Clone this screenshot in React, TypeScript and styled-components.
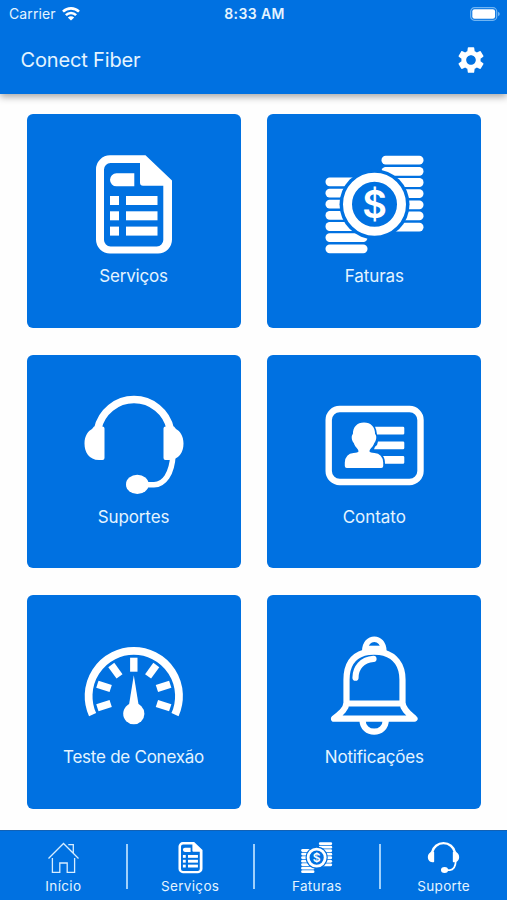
import React from "react";
import styled, { createGlobalStyle } from "styled-components";
import { MdSettings } from "react-icons/md";

const BLUE = "#0071e1";

const GlobalStyle = createGlobalStyle`
  * { box-sizing: border-box; }
  body { margin: 0; background: #fefefe; }
`;

const Screen = styled.div`
  width: 507px;
  height: 900px;
  display: flex;
  flex-direction: column;
  overflow: hidden;
  background: #fefefe;
  color: #e4f4ff;
  font-family: Inter, "Liberation Sans", sans-serif;
`;

const Header = styled.header`
  height: 93.5px;
  flex: none;
  background: ${BLUE};
  box-shadow: 0 3px 7px rgba(0, 0, 0, 0.34);
`;

const StatusBar = styled.div`
  height: 27px;
  display: grid;
  grid-template-columns: 1fr auto 1fr;
  align-items: center;
  padding: 0 7px 0 9px;
`;

const Carrier = styled.div`
  display: flex;
  align-items: center;
  gap: 6px;
  font-size: 14px;
  letter-spacing: 0.1px;
`;

const Clock = styled.div`
  font-size: 14px;
  font-weight: 600;
  letter-spacing: 0.4px;
`;

const BatterySlot = styled.div`
  display: flex;
  justify-content: flex-end;
`;

const TitleBar = styled.div`
  height: 66px;
  display: flex;
  align-items: center;
  justify-content: space-between;
  padding: 0 20px 0 20.5px;
`;

const Title = styled.h1`
  margin: 0;
  font-size: 20px;
  font-weight: 400;
  letter-spacing: -0.15px;
`;

const SettingsButton = styled.button`
  display: flex;
  padding: 0;
  border: 0;
  background: none;
  color: #fff;
`;

const Tiles = styled.main`
  flex: 1;
  display: grid;
  grid-template-columns: 214px 214px;
  grid-auto-rows: 213.5px;
  gap: 27.2px 26.8px;
  padding: 20.5px 26.5px 0;
`;

const Tile = styled.button`
  display: flex;
  flex-direction: column;
  align-items: center;
  padding: 41px 0 0;
  border: 0;
  border-radius: 6px;
  background: ${BLUE};
  color: inherit;
  font-family: inherit;
`;

const TileLabel = styled.span<{ $spacing: number }>`
  margin-top: 12px;
  font-size: 17px;
  line-height: 22px;
  letter-spacing: ${(p) => p.$spacing}px;
  white-space: nowrap;
`;

const TabBar = styled.nav`
  height: 70.5px;
  flex: none;
  display: grid;
  grid-template-columns: repeat(4, 1fr);
  background: ${BLUE};
  border-top: 1px solid #1261b4;
`;

const Tab = styled.button`
  display: flex;
  flex-direction: column;
  align-items: center;
  margin-left: -1px;
  padding: 11px 0 0 1px;
  border: 0;
  background: linear-gradient(#9fd0fb, #9fd0fb) left 13px / 2px 45px no-repeat;
  color: inherit;
  font-family: inherit;

  &:first-child { background: none; }
`;

const TabLabel = styled.span`
  margin-top: 4px;
  font-size: 13.5px;
  line-height: 18px;
  letter-spacing: 0.35px;
`;

const Glyph = styled.svg`
  display: block;
  flex: none;
  overflow: visible;
`;

type IconProps = { size: number };

const DocumentIcon = ({ size }: IconProps) => (
  <Glyph width={size} height={size} viewBox="0 0 98 98" fill="#fff">
    <path
      fillRule="evenodd"
      d="M25 .3H60.5L87 25.5V84.5a14 14 0 0 1-14 14H25a14 14 0 0 1-14-14V14.300A14 14 0 0 1 25 .3ZM25.500 8A6.500 6.500 0 0 0 19 14.500V85a6.500 6.500 0 0 0 6.500 6.500H71.800a6.500 6.500 0 0 0 6.500-6.500V30.700H58a3 3 0 0 1-3-3V8Z"
    />
    <path d="M31.500 18.300H49.300V31.300H31.500a6.500 6.500 0 0 1 0-13Z" />
    {[41, 56.3, 71.6].map((y) => (
      <g key={y}>
        <rect x="25" y={y} width="9" height="9" />
        <rect x="41" y={y} width="31.500" height="9" />
      </g>
    ))}
  </Glyph>
);

const CoinsIcon = ({ size }: IconProps) => (
  <Glyph width={size} height={size} viewBox="-.5 0 98 98" fill="#fff">
    {[0, 1, 2, 3, 4, 5, 6].map((i) => (
      <g key={i}>
        <rect x="56" y={0.8 + i * 11.15} width="42" height="8.800" rx="4.200" />
        <rect x="0" y={22.5 + i * 11.15} width="42" height="8.800" rx="4.200" />
      </g>
    ))}
    <circle cx="49" cy="49.300" r="35" fill={BLUE} />
    <circle cx="49" cy="49.300" r="27" fill="none" stroke="#fff" strokeWidth="9" />
    <text
      x="49"
      y="63"
      textAnchor="middle"
      fontFamily="Inter, sans-serif"
      fontSize="38"
      fontWeight="600"
    >
      $
    </text>
  </Glyph>
);

const HeadsetIcon = ({ size }: IconProps) => (
  <Glyph width={size} height={size} viewBox="0 0 98 98" fill="#fff">
    <path d="M12.700 33A37.100 37.100 0 0 1 85.300 33" fill="none" stroke="#fff" strokeWidth="7.500" />
    <path d="M9 30.500H17.500a2 2 0 0 1 2 2V62a2 2 0 0 1-2 2H14C4 64-.5 56-.5 47.500C-.5 40 3 35 7 33Z" />
    <path d="M89 30.500H80.500a2 2 0 0 0-2 2V62a2 2 0 0 0 2 2H84C94 64 98.500 56 98.500 47.500C98.500 40 95 35 91 33Z" />
    <path d="M88 59C87 78 79 88.700 69 88.700H60" fill="none" stroke="#fff" strokeWidth="5.500" />
    <ellipse cx="52.300" cy="88.400" rx="11.300" ry="9.600" />
  </Glyph>
);

const ContactIcon = ({ size }: IconProps) => (
  <Glyph width={size} height={size} viewBox="-.5 .5 98 98" fill="#fff">
    <rect x="3.200" y="13.500" width="91.800" height="73" rx="11" fill="none" stroke="#fff" strokeWidth="6.400" />
    <path d="M49.500 31.300H77.500a1.300 1.300 0 0 1 1.300 1.300V37.700a1.300 1.300 0 0 1-1.300 1.300H51.500Q51 34 49.500 31.300ZM52.500 46H77.500a1.300 1.300 0 0 1 1.300 1.300V52.400a1.300 1.300 0 0 1-1.300 1.300H48.500Q49 51 51.500 49.500ZM57.500 60.500H77.500a1.300 1.300 0 0 1 1.300 1.300V67a1.300 1.300 0 0 1-1.300 1.300H59.500Q59.500 63 57.500 60.500Z" />
    <path d="M38.500 27C45.500 27 49.600 31.500 49.600 38.500C51.500 40 51 45 48.800 47.500C47.500 52 44 53 44 56Q44.500 57 49 57.500Q57 58 57.700 67V70.500Q57.700 72.500 55.700 72.500H21.300Q19.300 72.500 19.300 70.500V67Q20 58 28 57.500Q32.500 57 33 56C33 53 29.500 52 28.300 47.500C26 45 25.500 40 27.400 38.500C27.400 31.500 31.500 27 38.500 27Z" />
  </Glyph>
);

const GaugeIcon = ({ size }: IconProps) => (
  <Glyph width={size} height={size} viewBox="0 -.7 98 98" fill="#fff">
    <path d="M7.600 78A45.200 45.200 0 1 1 90 78" fill="none" stroke="#fff" strokeWidth="7.800" />
    {[-108, -72, -36, 0, 36, 72, 108].map((angle) => (
      <rect
        key={angle}
        x="45.100"
        y="21"
        width="7.400"
        height="14"
        transform={`rotate(${angle} 48.800 59.300)`}
      />
    ))}
    <path d="M48.800 38.500L53.900 70H43.700Z" />
    <circle cx="48.800" cy="77" r="10.600" />
  </Glyph>
);

const BellIcon = ({ size }: IconProps) => (
  <Glyph width={size} height={size} viewBox="0 -.7 98 98" fill="none" stroke="#fff" strokeWidth="6.200">
    <path
      strokeLinejoin="round"
      d="M21.500 66V43C21.500 27 29 19 39 16C44 14.500 54 14.500 59 16C69 19 77.500 27 77.500 43V66C78 73 84 77 89.500 82H9C15 77 21 73 21.500 66ZM21 66.800H78"
    />
    <path d="M39.800 14.500C40 -1.500 58.600 -1.500 58.800 14.500" strokeWidth="5.600" />
    <path d="M42 11.500H56.500" strokeWidth="5" />
    <path d="M37.500 83C37.500 99 60.800 99 60.800 83" />
    <path d="M30.500 41C30.500 31 37 23 48.500 22.200" strokeLinecap="round" />
  </Glyph>
);

const HomeIcon = ({ size }: IconProps) => (
  <Glyph width={size} height={size} viewBox="0 0 31 31" fill="none" stroke="#d7edff" strokeWidth="1.300">
    <path d="M.5 16.500L15.500 1.500L30.500 16.500M4.400 16V30.300H11.800V21H19.200V30.300H26.600V16M20.300 2.600H25.300V11" />
  </Glyph>
);

const WifiIcon = () => (
  <Glyph width="18" height="14" viewBox="0 0 18 14" fill="none" stroke="#fff" strokeWidth="2.600">
    <path d="M1 4.600C5.500 .3 12.500 .3 17 4.600M3.900 8.200C6.800 5.300 11.200 5.300 14.100 8.200" />
    <path d="M9 13.600L5.800 10.500Q9 7.900 12.200 10.500Z" fill="#fff" stroke="none" />
  </Glyph>
);

const BatteryIcon = () => (
  <Glyph width="30" height="14" viewBox="0 0 30 14">
    <rect x=".700" y=".700" width="26" height="12.600" rx="3.800" fill="none" stroke="#70b5f3" strokeWidth="1.200" />
    <rect x="2.300" y="2.300" width="22.800" height="9.400" rx="2.200" fill="#fff" />
    <path d="M28 4.700Q29.800 5.500 29.800 7T28 9.300Z" fill="#70b5f3" />
  </Glyph>
);

const tiles = [
  { label: "Serviços", Icon: DocumentIcon, spacing: -0.2 },
  { label: "Faturas", Icon: CoinsIcon, spacing: -0.1 },
  { label: "Suportes", Icon: HeadsetIcon, spacing: -0.1 },
  { label: "Contato", Icon: ContactIcon, spacing: -0.05 },
  { label: "Teste de Conexão", Icon: GaugeIcon, spacing: -0.25 },
  { label: "Notificações", Icon: BellIcon, spacing: -0.2 },
];

const tabs = [
  { label: "Início", Icon: HomeIcon },
  { label: "Serviços", Icon: DocumentIcon },
  { label: "Faturas", Icon: CoinsIcon },
  { label: "Suporte", Icon: HeadsetIcon },
];

export default function App() {
  return (
    <>
      <GlobalStyle />
      <Screen>
        <Header>
          <StatusBar>
            <Carrier>
              Carrier
              <WifiIcon />
            </Carrier>
            <Clock>8:33 AM</Clock>
            <BatterySlot>
              <BatteryIcon />
            </BatterySlot>
          </StatusBar>
          <TitleBar>
            <Title>Conect Fiber</Title>
            <SettingsButton aria-label="Configurações">
              <MdSettings size={32} />
            </SettingsButton>
          </TitleBar>
        </Header>
        <Tiles>
          {tiles.map(({ label, Icon, spacing }) => (
            <Tile key={label}>
              <Icon size={98} />
              <TileLabel $spacing={spacing}>{label}</TileLabel>
            </Tile>
          ))}
        </Tiles>
        <TabBar>
          {tabs.map(({ label, Icon }) => (
            <Tab key={label}>
              <Icon size={31} />
              <TabLabel>{label}</TabLabel>
            </Tab>
          ))}
        </TabBar>
      </Screen>
    </>
  );
}
